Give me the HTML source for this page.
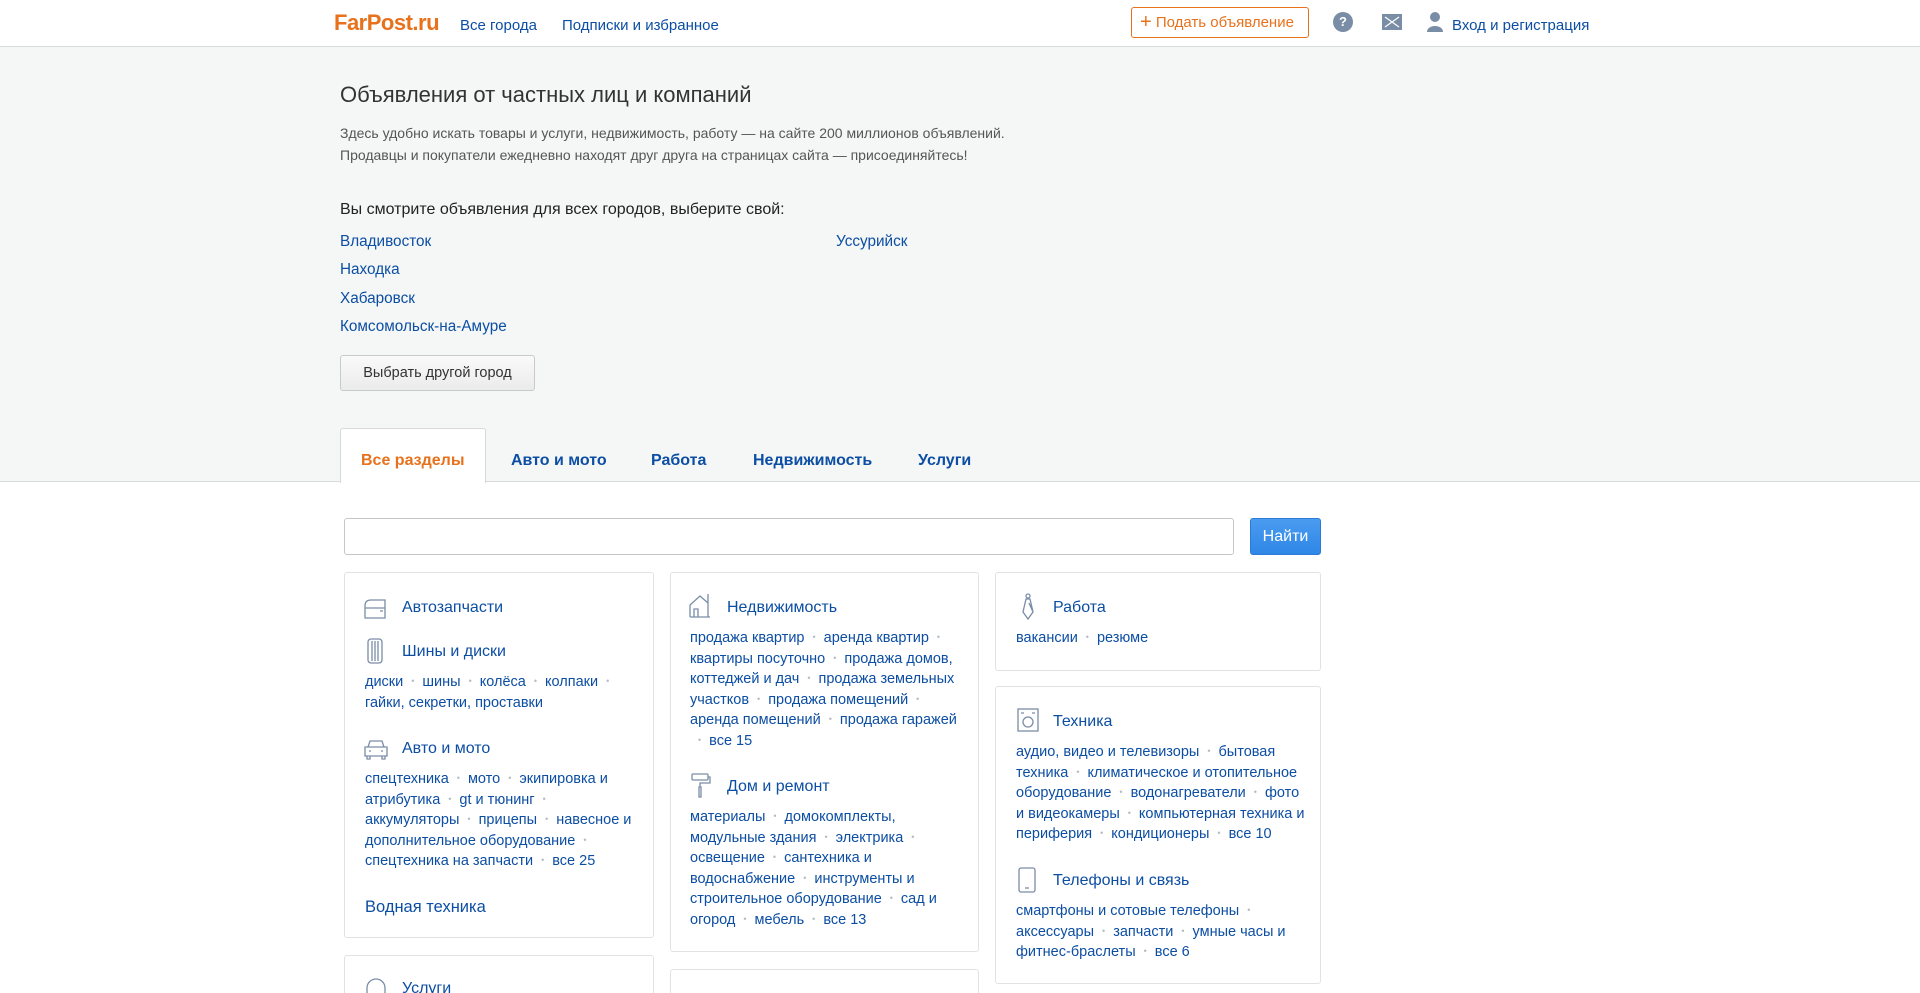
<!DOCTYPE html>
<html><head><meta charset="utf-8"><style>
*{margin:0;padding:0;box-sizing:border-box}
html,body{width:1920px;height:993px;overflow:hidden}
body{background:#fff;font-family:"Liberation Sans",Arial,sans-serif;position:relative;color:#333}
a{color:#0c4ea3;text-decoration:none}
.abs{position:absolute}
.hdr{position:absolute;left:0;top:0;width:1920px;height:47px;border-bottom:1px solid #d9dcdf;background:#fff}
.gray{position:absolute;left:0;top:47px;width:1920px;height:435px;background:#f5f7f7;border-bottom:1px solid #d6dadd}
.card{position:absolute;border:1px solid #e0e3e6;border-radius:3px;background:#fff}
.t{position:absolute;font-size:16px;line-height:22px;color:#0c4ea3;white-space:nowrap}
.l{position:absolute;font-size:14.5px;line-height:20.6px;color:#0c4ea3}
.d{color:#b5bcc4;font-size:9px;padding:0 8px;vertical-align:2px;line-height:0}
.ic{position:absolute}
.tab{position:absolute;top:449px;font-size:16px;font-weight:bold;color:#0c4ea3;line-height:24px}
.hl{font-size:15px;top:17px}
</style></head><body>
<div class="hdr"></div>
<div class="abs" style="left:334px;top:10px;font-size:22px;font-weight:bold;color:#e8711c;letter-spacing:-0.5px">FarPost.ru</div>
<a class="abs hl" style="left:460px">Все города</a>
<a class="abs hl" style="left:562px">Подписки и избранное</a>
<div class="abs" style="left:1131px;top:7px;width:178px;height:31px;border:1px solid #e8711c;border-radius:3px;color:#e8711c;font-size:15px;line-height:29px;padding-left:8px"><span style="font-size:20px;vertical-align:-1px">+</span> Подать объявление</div>
<div class="abs" style="left:1333px;top:12px;width:20px;height:20px;border-radius:50%;background:#7a8da6;color:#fff;font-size:13px;font-weight:bold;text-align:center;line-height:20px">?</div>
<svg class="abs" style="left:1382px;top:14px" width="20" height="16"><rect width="20" height="16" fill="#7a8da6"/><path d="M3 3l14 10M17 3L3 13" stroke="#fff" stroke-width="1.2"/></svg>
<svg class="abs" style="left:1426px;top:11px" width="18" height="22"><circle cx="9" cy="6" r="5" fill="#7a8da6"/><path d="M1 21c0-8 16-8 16 0z" fill="#7a8da6"/></svg>
<a class="abs hl" style="left:1452px">Вход и регистрация</a>

<div class="gray"></div>
<div class="abs" style="left:340px;top:82px;font-size:22px;color:#333">Объявления от частных лиц и компаний</div>
<div class="abs" style="left:340px;top:122px;font-size:14px;line-height:22px;color:#555">Здесь удобно искать товары и услуги, недвижимость, работу — на сайте 200 миллионов объявлений.<br>Продавцы и покупатели ежедневно находят друг друга на страницах сайта — присоединяйтесь!</div>
<div class="abs" style="left:340px;top:201px;font-size:16px;color:#222">Вы смотрите объявления для всех городов, выберите свой:</div>
<a class="abs" style="left:340px;top:233px;font-size:15.3px">Владивосток</a>
<a class="abs" style="left:340px;top:261px;font-size:15.3px">Находка</a>
<a class="abs" style="left:340px;top:290px;font-size:15.3px">Хабаровск</a>
<a class="abs" style="left:340px;top:318px;font-size:15.3px">Комсомольск-на-Амуре</a>
<a class="abs" style="left:836px;top:233px;font-size:15.3px">Уссурийск</a>
<div class="abs" style="left:340px;top:355px;width:195px;height:36px;border:1px solid #c8cbce;border-radius:3px;background:linear-gradient(#fafafa,#ebebeb);font-size:14.5px;line-height:34px;text-align:center;color:#333">Выбрать другой город</div>

<div class="abs" style="left:340px;top:428px;width:146px;height:55px;background:#fff;border:1px solid #d6dadd;border-bottom:none;border-radius:3px 3px 0 0"></div>
<div class="tab" style="left:361px;color:#e8711c">Все разделы</div>
<div class="tab" style="left:511px">Авто и мото</div>
<div class="tab" style="left:651px">Работа</div>
<div class="tab" style="left:753px">Недвижимость</div>
<div class="tab" style="left:918px">Услуги</div>

<div class="abs" style="left:344px;top:518px;width:890px;height:37px;border:1px solid #c4c7ca;border-radius:3px"></div>
<div class="abs" style="left:1250px;top:518px;width:71px;height:37px;background:linear-gradient(#4a9cf0,#2f86e6);border:1px solid #2b7bd6;border-radius:3px;color:#fff;font-size:16px;line-height:35px;text-align:center">Найти</div>

<!-- col1 -->
<div class="card" style="left:344px;top:572px;width:310px;height:366px"></div>
<svg class="ic" style="left:364px;top:597px" width="22" height="22" fill="none" stroke="#7a8da6" stroke-width="1.3"><path d="M1 21V9Q1 3 7 3h14v18zM1 11h20M16 14h3"/></svg>
<div class="t" style="left:402px;top:597px">Автозапчасти</div>
<svg class="ic" style="left:367px;top:638px" width="16" height="26" fill="none" stroke="#7a8da6" stroke-width="1.3"><rect x="1" y="1" width="14" height="24" rx="3"/><path d="M5 3v20M8 3v20M11 3v20"/></svg>
<div class="t" style="left:402px;top:641px">Шины и диски</div>
<div class="l" style="left:365px;top:672px;width:270px">диски<span class="d">•</span>шины<span class="d">•</span>колёса<span class="d">•</span>колпаки<span class="d">•</span> гайки, секретки, проставки</div>
<svg class="ic" style="left:364px;top:738px" width="24" height="22" fill="none" stroke="#7a8da6" stroke-width="1.3"><path d="M4 9l2-6h12l2 6M1 9h22v9H1zM3 18v3h3v-3M18 18v3h3v-3M5 13h2M17 13h2"/></svg>
<div class="t" style="left:402px;top:738px">Авто и мото</div>
<div class="l" style="left:365px;top:769px;width:270px">спецтехника<span class="d">•</span>мото<span class="d">•</span>экипировка и атрибутика<span class="d">•</span>gt и тюнинг<span class="d">•</span> аккумуляторы<span class="d">•</span>прицепы<span class="d">•</span>навесное и дополнительное оборудование<span class="d">•</span> спецтехника на запчасти<span class="d">•</span>все 25</div>
<div class="t" style="left:365px;top:896px;font-size:16.5px">Водная техника</div>
<div class="card" style="left:344px;top:955px;width:310px;height:60px"></div>
<svg class="ic" style="left:364px;top:977px" width="24" height="22" fill="none" stroke="#7a8da6" stroke-width="1.3"><path d="M3 16V11a9 9 0 0118 0v5"/></svg>
<div class="t" style="left:402px;top:978px">Услуги</div>

<!-- col2 -->
<div class="card" style="left:670px;top:572px;width:309px;height:380px"></div>
<svg class="ic" style="left:689px;top:592px" width="22" height="26" fill="none" stroke="#7a8da6" stroke-width="1.3"><path d="M1 25V13L11 4l8 7M19 2v23M1 25h20M5 25v-8h4v8"/></svg>
<div class="t" style="left:727px;top:597px">Недвижимость</div>
<div class="l" style="left:690px;top:628px;width:280px">продажа квартир<span class="d">•</span>аренда квартир<span class="d">•</span> квартиры посуточно<span class="d">•</span>продажа домов, коттеджей и дач<span class="d">•</span>продажа земельных участков<span class="d">•</span>продажа помещений<span class="d">•</span> аренда помещений<span class="d">•</span>продажа гаражей <span class="d">•</span>все 15</div>
<svg class="ic" style="left:691px;top:773px" width="20" height="26" fill="none" stroke="#7a8da6" stroke-width="1.3"><rect x="1" y="1" width="16" height="6" rx="1"/><path d="M17 4h2v6H9v4M8 14h2v10H8z"/></svg>
<div class="t" style="left:727px;top:776px">Дом и ремонт</div>
<div class="l" style="left:690px;top:807px;width:275px">материалы<span class="d">•</span>домокомплекты, модульные здания<span class="d">•</span>электрика<span class="d">•</span> освещение<span class="d">•</span>сантехника и водоснабжение<span class="d">•</span>инструменты и строительное оборудование<span class="d">•</span>сад и огород<span class="d">•</span>мебель<span class="d">•</span>все 13</div>
<div class="card" style="left:670px;top:969px;width:309px;height:40px"></div>

<!-- col3 -->
<div class="card" style="left:995px;top:572px;width:326px;height:99px"></div>
<svg class="ic" style="left:1020px;top:593px" width="16" height="28" fill="none" stroke="#7a8da6" stroke-width="1.3"><circle cx="8" cy="3" r="2"/><path d="M6 6h4l3 13-5 7-5-7zM9 10l4 9"/></svg>
<div class="t" style="left:1053px;top:597px">Работа</div>
<div class="l" style="left:1016px;top:628px;width:285px">вакансии<span class="d">•</span>резюме</div>
<div class="card" style="left:995px;top:686px;width:326px;height:298px"></div>
<svg class="ic" style="left:1017px;top:708px" width="22" height="24" fill="none" stroke="#7a8da6" stroke-width="1.3"><rect x="1" y="1" width="20" height="22"/><circle cx="11" cy="14" r="5"/><path d="M4 5h3M15 5h3"/></svg>
<div class="t" style="left:1053px;top:711px">Техника</div>
<div class="l" style="left:1016px;top:742px;width:290px">аудио, видео и телевизоры<span class="d">•</span>бытовая техника<span class="d">•</span>климатическое и отопительное оборудование<span class="d">•</span>водонагреватели<span class="d">•</span>фото и видеокамеры<span class="d">•</span>компьютерная техника и периферия<span class="d">•</span>кондиционеры<span class="d">•</span>все 10</div>
<svg class="ic" style="left:1018px;top:867px" width="18" height="26" fill="none" stroke="#7a8da6" stroke-width="1.3"><rect x="1" y="1" width="16" height="24" rx="2"/><path d="M7 21h4"/></svg>
<div class="t" style="left:1053px;top:870px">Телефоны и связь</div>
<div class="l" style="left:1016px;top:901px;width:290px">смартфоны и сотовые телефоны<span class="d">•</span> аксессуары<span class="d">•</span>запчасти<span class="d">•</span>умные часы и фитнес-браслеты<span class="d">•</span>все 6</div>
</body></html>
